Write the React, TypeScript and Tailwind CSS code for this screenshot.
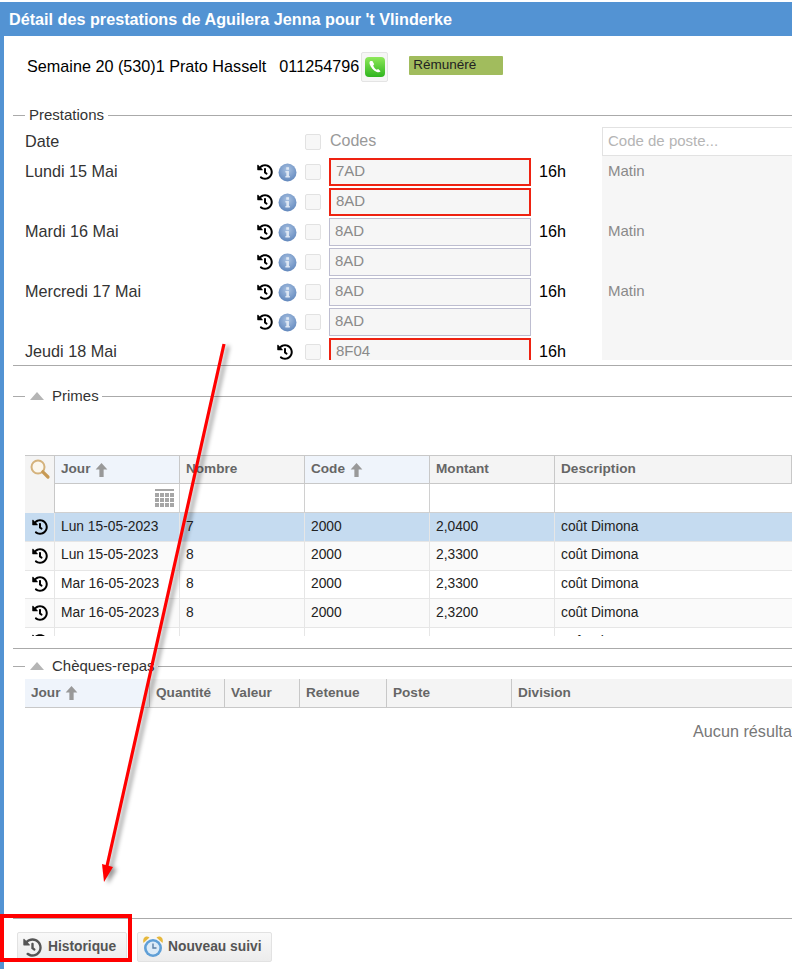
import { FaHistory } from "react-icons/fa";

const prestations = [
  { day: "Lundi 15 Mai", code: "7AD", hours: "16h", post: "Matin", error: true, info: true },
  { day: "", code: "8AD", hours: "", post: "", error: true, info: true },
  { day: "Mardi 16 Mai", code: "8AD", hours: "16h", post: "Matin", error: false, info: true },
  { day: "", code: "8AD", hours: "", post: "", error: false, info: true },
  { day: "Mercredi 17 Mai", code: "8AD", hours: "16h", post: "Matin", error: false, info: true },
  { day: "", code: "8AD", hours: "", post: "", error: false, info: true },
  { day: "Jeudi 18 Mai", code: "8F04", hours: "16h", post: "", error: true, info: false },
];

const primes = [
  { jour: "Lun 15-05-2023", nombre: "7", code: "2000", montant: "2,0400" },
  { jour: "Lun 15-05-2023", nombre: "8", code: "2000", montant: "2,3300" },
  { jour: "Mar 16-05-2023", nombre: "8", code: "2000", montant: "2,3300" },
  { jour: "Mar 16-05-2023", nombre: "8", code: "2000", montant: "2,3200" },
  { jour: "Mer 17-05-2023", nombre: "8", code: "2000", montant: "2,3300" },
];

function SortArrow() {
  return (
    <svg width="13" height="16" viewBox="0 0 12 15" className="ml-[5px] shrink-0">
      <path d="M6 1 L11.5 7 H8 V14 H4 V7 H0.5 Z" fill="#999999" />
    </svg>
  );
}

function InfoIcon() {
  return (
    <svg width="19" height="19" viewBox="0 0 18 18" className="shrink-0">
      <defs>
        <radialGradient id="infoBlue" cx="50%" cy="35%" r="65%">
          <stop offset="0%" stopColor="#a9c2e2" />
          <stop offset="100%" stopColor="#6288bd" />
        </radialGradient>
      </defs>
      <circle cx="9" cy="9" r="8.5" fill="url(#infoBlue)" />
      <rect x="7.8" y="4" width="2.6" height="2.4" fill="#dfe8f4" />
      <path d="M7 7.6 H10.4 V12.4 H11.2 V13.8 H7 V12.4 H7.9 V9 H7 Z" fill="#dfe8f4" />
    </svg>
  );
}

function PhoneIcon() {
  return (
    <svg width="22" height="22" viewBox="0 0 22 22">
      <defs>
        <linearGradient id="phoneGreen" x1="0" y1="0" x2="0" y2="1">
          <stop offset="0%" stopColor="#8ee85a" />
          <stop offset="100%" stopColor="#2fb51f" />
        </linearGradient>
      </defs>
      <rect x="1" y="1" width="20" height="20" rx="4" fill="url(#phoneGreen)" />
      <path
        d="M6.5 5 C5.5 5.6 5.2 6.8 5.8 8.4 C7 11.6 9.6 14.6 12.8 16 C14.4 16.7 15.8 16.4 16.6 15.2 L14.2 12.9 L12.7 13.7 C11 12.8 9.8 11.2 9.2 9.4 L10.2 8.2 L8.4 5 Z"
        fill="#ffffff"
      />
    </svg>
  );
}

function ClockIcon() {
  return (
    <svg width="22" height="24" viewBox="0 0 22 24" className="shrink-0">
      <path d="M1.5 8 C0 3 4 0 7.5 2.5 Z" fill="#e6b83c" />
      <path d="M20.5 8 C22 3 18 0 14.5 2.5 Z" fill="#e6b83c" />
      <circle cx="11" cy="13" r="9" fill="#5f9fd6" />
      <circle cx="11" cy="13" r="6.4" fill="#dcebf7" />
      <path d="M11 8.5 V13 H14.5" stroke="#5a7fa5" strokeWidth="1.4" fill="none" />
    </svg>
  );
}

function SearchIcon() {
  return (
    <svg width="22" height="22" viewBox="0 0 22 22">
      <circle cx="9" cy="9" r="6.5" fill="#fbf7ee" stroke="#d4b27c" strokeWidth="2" />
      <path d="M13.8 13.8 L19 19" stroke="#c79a55" strokeWidth="3.2" strokeLinecap="round" />
    </svg>
  );
}

function CalendarIcon() {
  const cells = [];
  for (let y = 0; y < 3; y++) {
    for (let x = 0; x < 4; x++) {
      cells.push(<rect key={`${x}-${y}`} x={x * 5} y={4 + y * 5} width="4" height="4" fill="#a6a6a6" />);
    }
  }
  return (
    <svg width="20" height="18" viewBox="0 0 20 18">
      <rect x="0" y="0" width="19" height="2" fill="#a6a6a6" />
      {cells}
    </svg>
  );
}

function Legend({ label, collapsible }: { label: string; collapsible?: boolean }) {
  return (
    <div className="flex items-center h-[18px] pl-[9px] text-[15px] text-[#333333]">
      <div className="w-[12px] h-px bg-[#aaaaaa]" />
      {collapsible && (
        <svg width="14" height="8" viewBox="0 0 14 8" className="ml-[5px] mr-[1px]">
          <path d="M7 0 L14 8 H0 Z" fill="#b5b5b5" />
        </svg>
      )}
      <span className={collapsible ? "ml-[7px] mr-[3px]" : "ml-[4px] mr-[4px]"}>{label}</span>
      <div className="flex-1 h-px bg-[#aaaaaa]" />
    </div>
  );
}

function HeaderCell({ label, sorted, className }: { label: string; sorted?: boolean; className: string }) {
  return (
    <div
      className={`flex items-center shrink-0 pl-[6px] border-r border-[#c8c8c8] font-bold text-[13.6px] text-[#666666] ${
        sorted ? "bg-[#eff4fb]" : "bg-[#f4f4f4]"
      } ${className}`}
    >
      {label}
      {sorted && <SortArrow />}
    </div>
  );
}

export default function App() {
  return (
    <div className="relative w-[792px] h-[969px] overflow-hidden bg-white font-['Liberation_Sans',Arial,sans-serif]">
      <div className="mt-[2px] h-[967px] border-l-[4px] border-[#5393d3] flex flex-col">
        {/* Title */}
        <div className="h-[34px] -ml-[4px] pl-[9px] flex items-center shrink-0 bg-[#5393d3] text-white font-bold text-[16.2px]">
          Détail des prestations de Aguilera Jenna pour 't Vlinderke
        </div>

        {/* Week info */}
        <div className="h-[60px] pl-[23px] pt-[16px] flex items-start shrink-0 text-[16.2px] text-black">
          <span className="mt-[2px]">Semaine 20 (530)1 Prato Hasselt</span>
          <span className="ml-[13px] mt-[2px]">011254796</span>
          <span className="w-[27px] h-[30px] flex items-center justify-center bg-[#f6f6f6] border border-[#e4e4e4] rounded-[2px] ml-[2px]">
            <PhoneIcon />
          </span>
          <span className="ml-[21px] mt-[4px] w-[94px] h-[19px] pl-[4px] flex items-center bg-[#a1bc5d] text-[13.5px] text-[#222222] rounded-[1px]">
            Rémunéré
          </span>
        </div>

        {/* Prestations */}
        <div className="shrink-0 mt-[10px]">
          <Legend label="Prestations" />
        </div>
        <div className="relative h-[236px] shrink-0 overflow-hidden">
          <div className="flex h-full">
            <div className="w-[598px] shrink-0 pl-[21px] pt-[3px] text-[16.2px]">
              <div className="flex items-center h-[30px] text-[#333333]">
                <span className="w-[280px] pb-[2px]">Date</span>
                <span className="w-[16px] h-[16px] bg-[#f7f7f7] border border-[#e2e2e2] rounded-[2px]" />
                <span className="ml-[9px] pb-[2px] text-[16px] text-[#999999]">Codes</span>
              </div>
              {prestations.map((row, i) => (
                <div key={i} className="flex items-center h-[30px] text-[#333333]">
                  <span className="w-[230px] shrink-0 pb-[2px]">{row.day}</span>
                  <span className="w-[20px] flex justify-center shrink-0">
                    {row.info && <FaHistory className="text-[16px] text-black" />}
                  </span>
                  <span className="w-[24px] flex justify-center shrink-0">
                    {row.info ? <InfoIcon /> : <FaHistory className="text-[16px] text-black mr-[4px]" />}
                  </span>
                  <span className="ml-[6px] w-[16px] h-[16px] shrink-0 bg-[#f7f7f7] border border-[#e2e2e2] rounded-[2px]" />
                  <div
                    className={`ml-[8px] w-[202px] h-[28px] shrink-0 flex items-center pb-[2px] bg-[#f6f6f6] text-[#8a8a8a] text-[15px] ${
                      row.error ? "border-2 border-[#ee2211] pl-[5px]" : "border border-[#bdbdd0] pl-[5px]"
                    }`}
                  >
                    {row.code}
                  </div>
                  <span className="ml-[8px] pb-[2px] text-black">{row.hours}</span>
                </div>
              ))}
            </div>
            <div className="flex-1 pt-[3px] flex flex-col">
              <div className="h-[29px] shrink-0 border border-r-0 border-[#e2e2e2] pl-[5px] flex items-center text-[15px] text-[#b5b5b5]">
                Code de poste...
              </div>
              <div className="flex-1 bg-[#f6f6f6] pl-[6px] text-[15px] text-[#8a8a8a]">
                <div className="h-[30px] flex items-center">Matin</div>
                <div className="h-[30px]" />
                <div className="h-[30px] flex items-center">Matin</div>
                <div className="h-[30px]" />
                <div className="h-[30px] flex items-center">Matin</div>
              </div>
            </div>
          </div>
        </div>
        <div className="ml-[9px] h-px shrink-0 bg-[#aaaaaa] mt-[5px]" />

        {/* Primes */}
        <div className="shrink-0 mt-[21px]">
          <Legend label="Primes" collapsible />
        </div>
        <div className="h-[181px] shrink-0 mt-[50px] ml-[21px] overflow-hidden text-[13.8px] text-[#222222]">
          <div className="flex">
            <div className="w-[30px] shrink-0 bg-[#f4f4f4] border-t border-r border-[#c8c8c8] pl-[4px] pt-[2px]">
              <SearchIcon />
            </div>
            <div>
              <div className="flex h-[29px] border-t border-b border-[#c8c8c8]">
                <HeaderCell label="Jour" sorted className="w-[125px]" />
                <HeaderCell label="Nombre" className="w-[125px]" />
                <HeaderCell label="Code" sorted className="w-[125px]" />
                <HeaderCell label="Montant" className="w-[125px]" />
                <HeaderCell label="Description" className="w-[237px]" />
              </div>
              <div className="flex h-[29px]">
                <div className="w-[125px] border-r border-b border-[#d0d0d0] flex items-center justify-end pr-[4px]">
                  <CalendarIcon />
                </div>
                <div className="w-[125px] border-r border-b border-[#d0d0d0]" />
                <div className="w-[125px] border-r border-b border-[#d0d0d0]" />
                <div className="w-[125px] border-r border-b border-[#d0d0d0]" />
                <div className="w-[237px] border-b border-[#d0d0d0]" />
              </div>
            </div>
          </div>
          {primes.map((row, i) => (
            <div
              key={i}
              className={`flex h-[28.75px] items-center border-b border-[#e6e6e6] ${
                i === 0 ? "bg-[#c5dbf0]" : i % 2 === 1 ? "bg-[#fafafa]" : "bg-white"
              }`}
            >
              <div className="w-[30px] h-full shrink-0 flex items-center justify-center border-r border-[#e6e6e6]">
                <FaHistory className="text-[16px] text-black" />
              </div>
              <div className="w-[125px] h-full shrink-0 flex items-center pl-[6px] border-r border-[#e6e6e6]">{row.jour}</div>
              <div className="w-[125px] h-full shrink-0 flex items-center pl-[6px] border-r border-[#e6e6e6]">{row.nombre}</div>
              <div className="w-[125px] h-full shrink-0 flex items-center pl-[6px] border-r border-[#e6e6e6]">{row.code}</div>
              <div className="w-[125px] h-full shrink-0 flex items-center pl-[6px] border-r border-[#e6e6e6]">{row.montant}</div>
              <div className="flex-1 h-full flex items-center pl-[6px]">coût Dimona</div>
            </div>
          ))}
        </div>
        <div className="ml-[9px] h-px shrink-0 bg-[#aaaaaa] mt-[12px]" />

        {/* Chèques-repas */}
        <div className="shrink-0 mt-[8px]">
          <Legend label="Chèques-repas" collapsible />
        </div>
        <div className="ml-[21px] mt-[4px] flex h-[29px] shrink-0 border-b border-[#c8c8c8]">
          <HeaderCell label="Jour" sorted className="w-[125px]" />
          <HeaderCell label="Quantité" className="w-[75px]" />
          <HeaderCell label="Valeur" className="w-[75px]" />
          <HeaderCell label="Retenue" className="w-[87px]" />
          <HeaderCell label="Poste" className="w-[125px]" />
          <HeaderCell label="Division" className="w-[280px] border-r-0" />
        </div>
        <div className="flex-1 pt-[11px] pl-[689px] text-[16.2px] text-[#777777] whitespace-nowrap overflow-hidden">
          Aucun résultat
        </div>

        {/* Footer */}
        <div className="ml-[9px] h-px shrink-0 bg-[#aaaaaa]" />
        <div className="h-[50px] shrink-0 pt-[13px] pl-[13px] flex items-start gap-[10px] font-bold text-[13.8px] text-[#555555]">
          <button className="h-[30px] w-[110px] flex items-center pl-[5px] gap-[6px] rounded-[2px] border border-[#e2e2e2] bg-gradient-to-b from-[#f9f9f9] to-[#ececec]">
            <FaHistory className="text-[19px] text-[#555555]" />
            Historique
          </button>
          <button className="h-[30px] w-[135px] flex items-center pl-[4px] gap-[4px] rounded-[2px] border border-[#e2e2e2] bg-gradient-to-b from-[#f9f9f9] to-[#ececec]">
            <ClockIcon />
            Nouveau suivi
          </button>
        </div>
      </div>

      {/* Red annotation over the page */}
      <svg
        width="792"
        height="969"
        viewBox="0 0 792 969"
        className="absolute inset-0 pointer-events-none drop-shadow-[4px_2px_2px_rgba(0,0,0,0.4)]"
      >
        <path d="M224 344 L107 866" stroke="#ff0000" strokeWidth="3.2" fill="none" />
        <path d="M104 882 L102 864 L113 867 Z" fill="#ff0000" />
      </svg>
      <div className="absolute left-0 top-[914px] w-[132px] h-[48px] border-[4px] border-[#ff0000] pointer-events-none" />
    </div>
  );
}
